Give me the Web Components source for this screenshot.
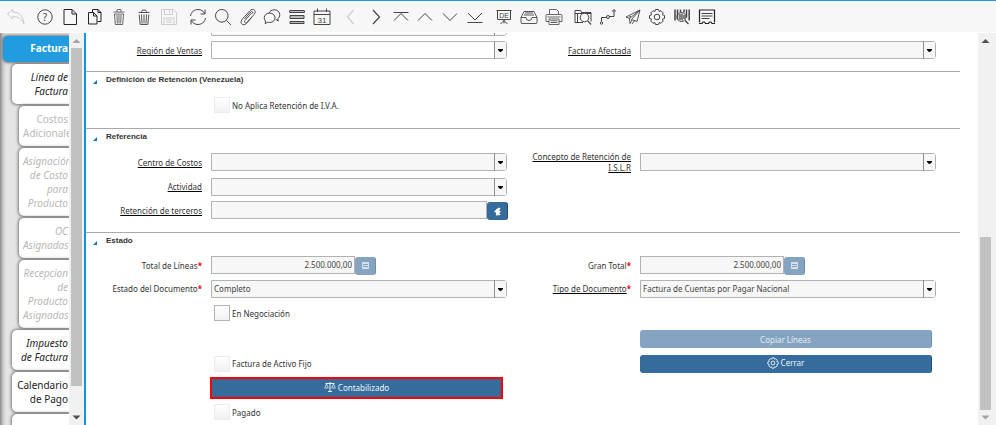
<!DOCTYPE html>
<html lang="es">
<head>
<meta charset="utf-8">
<title>Factura</title>
<style>
  html, body { height: 100%; margin: 0; }
  body { background: #fff; color: #333; font-family: "Noto Sans", "Open Sans", sans-serif; font-size: 8px; overflow: hidden; }
</style>
</head>
<body>
<erp-window>
  <erp-toolbar slot="toolbar">
    <tool-group style="--w:24px" icons="undo"></tool-group>
    <tool-group style="--w:148px" icons="help new copy trash trash2 save"></tool-group>
    <tool-group style="--w:148px" icons="refresh search attach chat grid calendar"></tool-group>
    <tool-group style="--w:148px" icons="prev next first up down last"></tool-group>
    <tool-group style="--w:74px" icons="report archive print"></tool-group>
    <tool-group style="--w:148px" icons="zoomacross workflow send process product form"></tool-group>
  </erp-toolbar>
  <tab-rail slot="tabs">
    <tab-item class="on">Factura</tab-item>
    <tab-item level="1" italic>Línea de Factura</tab-item>
    <tab-item level="2" off>Costos Adicionales</tab-item>
    <tab-item level="2" off italic>Asignación de Costo para Producto</tab-item>
    <tab-item level="2" off italic>OC Asignadas</tab-item>
    <tab-item level="2" off italic>Recepcion de Producto Asignadas</tab-item>
    <tab-item level="1" italic>Impuesto de Factura</tab-item>
    <tab-item level="1">Calendario de Pago</tab-item>
    <tab-item level="1"></tab-item>
  </tab-rail>
  <scroll-rail slot="tabscroll" style="--before:0;--thumb:338;--after:24;--up:#a3a3a3;--down:#505050"></scroll-rail>

  <form-section style="--rows:23px 24px;--pad:9px">
    <combo-field style="--row:1"></combo-field>
    <combo-field style="--row:2" label="Región de Ventas" editable></combo-field>
    <combo-field style="--row:2" side="right" label="Factura Afectada"></combo-field>
  </form-section>
  <form-section heading="Definición de Retención (Venezuela)" style="--rows:24px;--pad:11px">
    <check-field style="--row:1" label="No Aplica Retención de I.V.A." off></check-field>
  </form-section>
  <form-section heading="Referencia" style="--rows:24px 25px 23px;--pad:10px">
    <combo-field style="--row:1" label="Centro de Costos"></combo-field>
    <combo-field style="--row:1" side="right" label="Concepto de Retención de I.S.L.R"></combo-field>
    <combo-field style="--row:2" label="Actividad"></combo-field>
    <text-field style="--row:3" label="Retención de terceros" wide icon="partner"></text-field>
  </form-section>
  <form-section heading="Estado" style="--rows:22px 25px 24px 28px 21px 28px 20px;--pad:0px">
    <text-field style="--row:1" label="Total de Líneas" required value="2.500.000,00" icon="calc"></text-field>
    <text-field style="--row:1" side="right" label="Gran Total" required value="2.500.000,00" icon="calc"></text-field>
    <combo-field style="--row:2" label="Estado del Documento" plain required value="Completo"></combo-field>
    <combo-field style="--row:2" side="right" label="Tipo de Documento" required value="Factura de Cuentas por Pagar Nacional"></combo-field>
    <check-field style="--row:3" label="En Negociación"></check-field>
    <action-button style="--row:4" side="right" off>Copiar Líneas</action-button>
    <check-field style="--row:5" label="Factura de Activo Fijo" off></check-field>
    <action-button style="--row:5" side="right" icon="gear">Cerrar</action-button>
    <action-button style="--row:6" icon="scale" marked>Contabilizado</action-button>
    <check-field style="--row:7" label="Pagado" off></check-field>
  </form-section>

  <scroll-rail slot="scroll" style="--before:189;--thumb:173;--after:0;--up:#505050;--down:#a3a3a3"></scroll-rail>
</erp-window>

<script>
const define = (name, html) => customElements.define(name, class extends HTMLElement {
  connectedCallback() {
    if (this.shadowRoot) return;
    this.attachShadow({ mode: 'open' }).innerHTML = typeof html === 'function' ? html(this) : html;
  }
});

/* 20x20 line icons: title, markup, disabled */
const ICONS = {
  undo: ['Deshacer', '<path d="M1.500 7 6.700 2.300V5C13 5 17.500 9 18 17 15.500 11.500 12 9.500 6.700 9.500V12Z"/>', 1],
  help: ['Ayuda', '<circle cx="10" cy="10" r="7.2"/><text x="10" y="13.5" font-size="10" text-anchor="middle" font-family="Noto Sans, sans-serif" fill="currentColor" stroke="none">?</text>'],
  new: ['Nuevo', '<path stroke="#222" d="M4 2.500h8l4.500 4.500v10.500H4zM12 2.500V7h4.500"/>'],
  copy: ['Copiar registro', '<path stroke="#222" d="M7.500 5.500V2.500H13l3 3v9h-3.500M13 2.500v3h3M3.500 5.500h5l3.500 3.500v8H3.500zM8.500 5.500V9H12"/>'],
  trash: ['Eliminar', '<path stroke-width=".8" d="M4.500 5h11M8 5V3q0-.5.5-.5h3q.5 0 .5.500v2M5.500 7l.8 10.500h7.400l.8-10.500zM8 8l.3 8.500M10 8v8.500M12 8l-.3 8.500"/>'],
  trash2: ['Eliminar selección', '<path stroke-width=".9" d="M4.500 5.500h11M7.500 5l1-2h3l1 2M5.200 7.500l1 10h7.600l1-10M7.500 7.500l.5 9M10 7.500v9M12.500 7.500l-.5 9"/>'],
  save: ['Guardar', '<path d="M2.500 2.500h12l3 3v12h-15zM5.500 2.500v5h8v-5M10.500 3.500v2.500M5 17.500v-6.500h10v6.500M7 13h6M7 15.200h6"/>', 1],
  refresh: ['Refrescar', '<path d="M2.500 9C3 5 6.500 2.500 10 2.500c3 0 5.500 1.500 6.500 4M17 2.500v4.500h-4.500M17.500 11c-.5 4-4 6.500-7.500 6.500-3 0-5.500-1.500-6.500-4M3 17.500V13h4.500"/>'],
  search: ['Buscar', '<circle cx="8.800" cy="8.800" r="6.300"/><path d="M13.500 13.500l4.500 4.500"/>'],
  attach: ['Adjunto', '<path stroke-width=".9" d="M13.500 6 7 13.500c-1.500 1.800.8 3.300 2.200 1.800l7-8c3-3.600-1.500-6.800-4.300-3.600L4 12.500c-3 4 1.500 7 4.300 4l6-6.800M6.500 12l6-7c1.500-1.300 3 .2 2 1.500"/>'],
  chat: ['Chat', '<path d="M7 6.200C7.800 4 10 2.800 12.300 2.800c3.200 0 5.500 2.200 5.500 4.900 0 1.800-.8 3-2 3.800l.5 2.500-2.500-1.700M7.700 6.100c3.100 0 5.300 2 5.300 4.700s-2.200 4.700-5.300 4.700c-.8 0-1.400-.1-2-.3l-2.500 1.400.3-2.600c-.8-.8-1.300-1.900-1.300-3.200 0-2.700 2.400-4.700 5.500-4.700z"/>'],
  grid: ['Cambiar vista', '<path fill="#bbb" d="M3 3.500h14q.5 0 .5.500v1q0 .5-.5.500H3q-.5 0-.5-.5V4q0-.5.5-.5zM3 8.500h14v3H3zM3 14.500h14v2H3z"/>'],
  calendar: ['Calendario', '<path d="M2 4h16v13.500H2zM2 7.500h16M5.500 1.500v3.500M14.500 1.500v3.500"/><text x="10" y="15.500" font-size="8" text-anchor="middle" font-family="Liberation Sans, sans-serif" fill="currentColor" stroke="none">31</text>'],
  prev: ['Anterior', '<path stroke-width="1.200" d="M12.500 3 6.500 10l6 7"/>', 1],
  next: ['Siguiente', '<path stroke-width="1.200" d="M7 3l6.500 7L7 17"/>'],
  first: ['Primero', '<path d="M2.500 5.500h15M3 13.500 10 6.500l7 7"/>'],
  up: ['Arriba', '<path d="M3 13.500l7-7 7 7"/>'],
  down: ['Abajo', '<path d="M3 6.500l7 7 7-7"/>'],
  last: ['Último', '<path d="M3 6l7 7 7-7M2.500 15.500h15"/>'],
  report: ['Reporte', '<path d="M2.500 3.500h15M3.500 3.500v9h13v-9M10 12.500v4M6.500 17l3.500-3.500 3.500 3.500"/><text x="10" y="11" font-size="7" text-anchor="middle" font-family="Liberation Sans, sans-serif" fill="currentColor" stroke="none">DE</text>'],
  archive: ['Archivo', '<path stroke-width=".9" d="M5 4.500h10l3 6v5q0 1-1 1H3q-1 0-1-1v-5zM2 10.500h5q0 3 3 3t3-3h5M5 8h10M6 6h8"/>'],
  print: ['Imprimir', '<path stroke-width=".8" d="M5.500 7.500v-5h7l2 2v3M3 7.500h14q1 0 1 1v6h-3M5 14.500H2v-6q0-1 1-1M5 12h10v5.500H5zM3.500 10h13M6.500 13.800h7M6.500 15.500h7"/>'],
  zoomacross: ['Zoom', '<path d="M10 15.500H2v-12h5.500l1 2H18v9M2 6.500h16M4.500 6.500v9"/><circle cx="11.500" cy="10.500" r="4.300" fill="#f7f7f7"/><path stroke-width="1.200" d="M14.500 13.700l3.500 3.800"/>'],
  workflow: ['Flujo de trabajo', '<path d="M3.500 14.500v-4h5M11.500 9.500H16V5.500"/><circle cx="3.500" cy="16" r="1.200"/><circle cx="10" cy="10" r="1.500"/><circle cx="16" cy="4" r="1.200"/>'],
  send: ['Solicitud', '<path stroke-width=".9" d="M17 3 3 10l3.500 1.500L17 3l-8.500 9.500L14 14.500 17 3M6.500 11.500l.5 5 2-3.500M8 9.500l-2 .5M12 13l-3 4"/>'],
  process: ['Proceso', '<path d="M8.500 2.500h3l.6 2 1.900-.8 2.200 2.200-.8 1.900 2.100.7v3l-2.100.7.8 1.900-2.200 2.200-1.900-.8-.6 2h-3l-.6-2-1.900.8-2.200-2.200.8-1.900-2.100-.7v-3l2.100-.7-.8-1.900 2.200-2.200 1.900.8z"/><circle cx="10" cy="10" r="2.800"/>'],
  product: ['Producto', '<path stroke-width="1.500" d="M3 2.500v11M5.500 2.500v10M12 2.500v3M14.500 2.500v8M17.200 2.500v11M8.500 2.500v3"/><circle cx="9.500" cy="10" r="4.500"/><path stroke-width="1.300" d="M8 7v6M10 6.500v7M12 8v4M13 13.500l3.500 3.500"/>'],
  form: ['Formulario', '<path stroke="#222" stroke-width="1.200" d="M2.500 15.500V3h15v12.500M2 16.500h3l1-1.500h1.500l1 1.500h3l1-1.500H14l1 1.500h3"/><path stroke-width="1.200" d="M4.500 6.500h11M4.500 9h11M4.500 11.500h8"/>']
};
const SMALL = {
  gear: '<svg width="12" height="12" viewBox="0 0 20 20" fill="none" stroke="currentColor" stroke-width="1.300"><g transform="translate(-1.500 -1.500) scale(1.150)">' + ICONS.process[1] + '</g></svg>',
  scale: '<svg width="12" height="12" viewBox="0 0 12 12" fill="none" stroke="currentColor"><path d="M1.500 2.500h9M6 1v9.500M4 10.500h4"/><path stroke-width=".8" d="M.5 7h4M7.500 7h4M.8 6.500l1.700-3.500 1.700 3.500M7.800 6.500l1.700-3.500 1.700 3.500"/></svg>',
  calc: '<svg width="7" height="7" viewBox="0 0 7 7"><path fill="#d3dfea" d="M0 0h7v7H0z"/><path stroke="#84a4c1" d="M1 2.500h5M1 4.500h5"/></svg>',
  partner: '<svg width="9" height="9" viewBox="0 0 9 9"><path fill="#fff" d="M6.500.5 3.500 2 1 5h1.500L3.300 8.500l4-.5v-1L6 6.500l2-2L6 3.500 7.500 1.500z"/></svg>'
};

define('erp-window', `<style>
  :host { display: grid; height: 100vh; grid-template-columns: 69px 15px minmax(0, 1fr) 18px; grid-template-rows: 33px minmax(0, 1fr); }
  header { grid-column: 1 / -1; }
  main { border-left: 2px solid #0d9ade; padding-right: 18px; overflow: hidden; }
  .flow { margin-top: -18px; }
</style>
<header><slot name="toolbar"></slot></header>
<slot name="tabs"></slot><slot name="tabscroll"></slot>
<main><div class="flow"><slot></slot></div></main>
<slot name="scroll"></slot>`);

define('erp-toolbar', `<style>
  :host { display: flex; gap: 5px; padding-left: 4px; height: 31px; border-top: 1px solid #2299dd; background: #f7f7f7; border-bottom: 1px solid #fff; }
</style><slot></slot>`);

define('tool-group', el => `<style>
  :host { display: flex; width: var(--w); }
  button { flex: 1; display: grid; place-items: center; padding: 0; border: 0; background: none; color: #444; }
  button:disabled { color: #ccc; }
  svg { width: 20px; height: 20px; }
</style>` + el.getAttribute('icons').split(' ').map(n => `<button type="button" title="${ICONS[n][0]}" ${ICONS[n][2] ? 'disabled' : ''}><svg viewBox="0 0 20 20" fill="none" stroke="currentColor" stroke-width="1">${ICONS[n][1]}</svg></button>`).join(''));

define('tab-rail', `<style>
  :host { display: flex; flex-direction: column; gap: 2px; padding-top: 3px; overflow: hidden; background: linear-gradient(90deg, #8a8a8a, #c8c8c8 3px, #e4e4e4 6px); }
</style><slot></slot>`);

define('tab-item', `<style>
  :host { display: block; flex: none; margin-left: 3px; }
  :host([level="1"]) { margin-left: 12px; }
  :host([level="2"]) { margin-left: 19px; }
  a { display: block; min-height: 14px; padding: 6px 1px 6px 4px; border-radius: 5px 0 0 5px; box-shadow: 0 0 3px 1px #777; background: #fff; color: #222; font-size: 10px; line-height: 14px; text-align: right; text-decoration: none; }
  :host([italic]) a { font-style: italic; }
  :host([off]) a { color: #b8b8b8; }
  :host(.on) a { padding: 5px 1px 7px 4px; background: #219ce0; color: #fff; font-weight: bold; }
</style><a href="#"><slot></slot></a>`);

define('scroll-rail', `<style>
  :host { display: flex; flex-direction: column; background: #f1f1f1; min-height: 0; }
  svg { height: 15px; width: 15px; flex: none; }
  .track { flex: 1; display: flex; flex-direction: column; padding: 0 2px; width: 11px; }
  .before { flex: var(--before); } .thumb { flex: var(--thumb); background: #c1c1c1; } .after { flex: var(--after); }
</style>
<svg viewBox="0 0 15 15"><path fill="var(--up)" d="M3.500 10h8l-4-4z"/></svg>
<div class="track"><div class="before"></div><div class="thumb"></div><div class="after"></div></div>
<svg viewBox="0 0 15 15"><path fill="var(--down)" d="M3.500 5.500h8l-4 4z"/></svg>`);

define('form-section', el => `<style>
  :host { display: block; padding-bottom: var(--pad); }
  h2 { display: flex; align-items: flex-start; gap: 9px; box-sizing: border-box; height: 22px; margin: 0; padding: 1px 0 0 7px; border-top: 1px solid #aaa; font: bold 8px/14px "Liberation Sans", Arial, sans-serif; }
  h2 svg { margin-top: 7px; }
  .grid { display: grid; grid-template-columns: 125px minmax(0, 1fr) 133px minmax(0, 1fr); grid-template-rows: var(--rows); align-items: center; padding-right: 24px; }
</style>
${el.hasAttribute('heading') ? `<h2><svg width="4" height="4" viewBox="0 0 4 4"><path fill="#0b6fd0" d="M4 0v4H0z"/></svg>${el.getAttribute('heading')}</h2>` : ''}
<div class="grid"><slot></slot></div>`);

const FIELD = `<style>
  :host { display: contents; }
  .label { grid-row: var(--row); grid-column: 1; padding: 0 9px 0 20px; text-align: right; line-height: 11px; }
  .box { grid-row: var(--row); grid-column: 2; }
  :host([side=right]) .label { grid-column: 3; }
  :host([side=right]) .box { grid-column: 4; }
  .u { text-decoration: underline 1px #000; text-underline-offset: 1px; text-decoration-skip-ink: none; }
  b { color: #e00; font-weight: bold; }
  input, select, button { font: inherit; color: inherit; box-sizing: border-box; margin: 0; }
</style>`;
const label = (el, u) => `<label class="label" for="f"><span class="${u ? 'u' : ''}">${el.getAttribute('label') || ''}</span>${el.hasAttribute('required') ? '<b>*</b>' : ''}</label>`;

define('combo-field', el => FIELD + `<style>
  .box { display: grid; grid-template-columns: minmax(0, 1fr) 13px; }
  select { grid-area: 1 / 1 / 2 / 3; appearance: none; width: 100%; height: 18px; padding: 0 14px 0 2px; border: 1px solid #b2b2b2; border-radius: 0 3px 3px 0; background: #f7f7f7; color: #444; }
  :host([editable]) select { background: #fff; }
  svg { grid-area: 1 / 2; width: 13px; height: 18px; pointer-events: none; z-index: 1; }
</style>${label(el, !el.hasAttribute('plain'))}
<div class="box"><select id="f"><option>${el.getAttribute('value') || ''}</option></select>
<svg viewBox="0 0 13 18"><path fill="#f7f7f7" d="M1 1h11v16H1z"/><path stroke="#8f8f8f" d="M.5 0v18"/><path fill="#000" d="M4 8h5v1L7 11H6L4 9z"/></svg></div>`);

define('text-field', el => FIELD + `<style>
  .box { display: flex; }
  input { flex: 0 0 144px; width: 144px; height: 18px; padding: 0 2px; border: 1px solid #b2b2b2; background: #f7f7f7; color: #444; text-align: right; }
  :host([wide]) input { flex: 1; min-width: 0; }
  :host([wide]) .box { margin-right: -1px; }
  button { display: grid; place-items: center; width: 21px; height: 18px; margin-top: 1px; padding: 0; border: 0; border-right: 1px solid #6d8faf; border-radius: 3px; background: #84a4c1; }
  :host([wide]) button { background: #356c9b; border-color: #1f4e78; }
</style>${label(el, el.hasAttribute('wide'))}
<div class="box"><input id="f" readonly value="${el.getAttribute('value') || ''}"><button type="button" aria-label="Abrir">${SMALL[el.getAttribute('icon')]}</button></div>`);

define('check-field', el => FIELD + `<style>
  .box { display: flex; align-items: center; gap: 2px; padding-left: 3px; }
  input { appearance: none; width: 16px; height: 16px; border: 1px solid #b4b4b4; background: linear-gradient(#fff, #f1f1f1); }
  :host([off]) input { border-color: #ececec; }
</style><div class="box"><input id="f" type="checkbox" ${el.hasAttribute('off') ? 'disabled' : ''}><label for="f">${el.getAttribute('label')}</label></div>`);

define('action-button', el => FIELD + `<style>
  button { display: flex; align-items: center; justify-content: center; gap: 2px; height: 18px; margin-right: 4px; padding: 0 0 2px; border: 0; border-right: 1px solid #1f4e78; border-radius: 3px; background: #356c9b; color: #eef3f8; }
  :host([off]) button { background: #84a4c1; border-color: #6d8faf; color: #e3ebf2; padding: 0; }
  :host([marked]) button { height: 22px; margin-left: -1px; border: 2px solid #f00; border-radius: 0; }
</style><button class="box" type="button" ${el.hasAttribute('off') ? 'disabled' : ''}>${SMALL[el.getAttribute('icon')] || ''}<slot></slot></button>`);
</script>
</body>
</html>
